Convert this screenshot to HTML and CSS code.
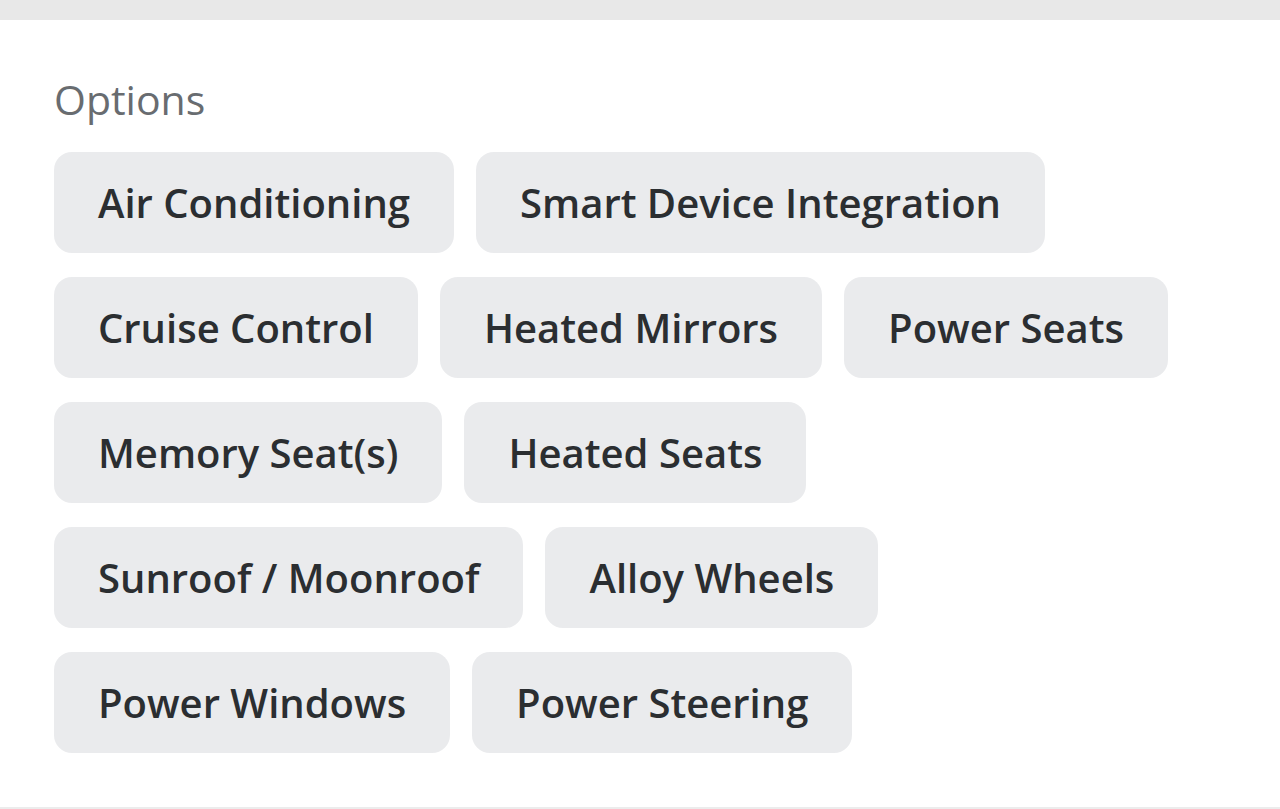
FILE: index.html
```html
<!DOCTYPE html>
<html lang="en">
<head>
  <meta charset="UTF-8">
  <meta name="viewport" content="width=device-width, initial-scale=1.0">
  <title>Options</title>
  <link rel="stylesheet" href="styles.css">
</head>
<body>
  <div class="topbar"></div>
  <section class="options">
    <h2 class="options-title">Options</h2>
    <ul class="chips">
      <li class="chip">Air Conditioning</li>
      <li class="chip">Smart Device Integration</li>
      <li class="chip">Cruise Control</li>
      <li class="chip">Heated Mirrors</li>
      <li class="chip">Power Seats</li>
      <li class="chip">Memory Seat(s)</li>
      <li class="chip">Heated Seats</li>
      <li class="chip">Sunroof / Moonroof</li>
      <li class="chip">Alloy Wheels</li>
      <li class="chip">Power Windows</li>
      <li class="chip">Power Steering</li>
    </ul>
  </section>
</body>
</html>
```

FILE: styles.css
```css
* {
  box-sizing: border-box;
}

body {
  margin: 0;
  padding: 0;
  background: #fff;
  font-family: 'Open Sans', sans-serif;
  color: #2b2e31;
}

.topbar {
  height: 20px;
  background: #e8e8e8;
}

.options {
  padding: 54px 54px 0;
  height: 789px;
  border-bottom: 2px solid #ececec;
}

.options-title {
  margin: 0 0 28px;
  font-size: 41px;
  font-weight: 400;
  line-height: 50px;
  color: #686c70;
}

.chips {
  list-style: none;
  margin: 0;
  padding: 0;
  width: 1172px;
  display: flex;
  flex-wrap: wrap;
  gap: 24px 22px;
}

.chip {
  height: 101px;
  padding: 0 44px;
  display: flex;
  align-items: center;
  background: #eaebed;
  border-radius: 18px;
  font-size: 40px;
  font-weight: 600;
  white-space: nowrap;
}
```
